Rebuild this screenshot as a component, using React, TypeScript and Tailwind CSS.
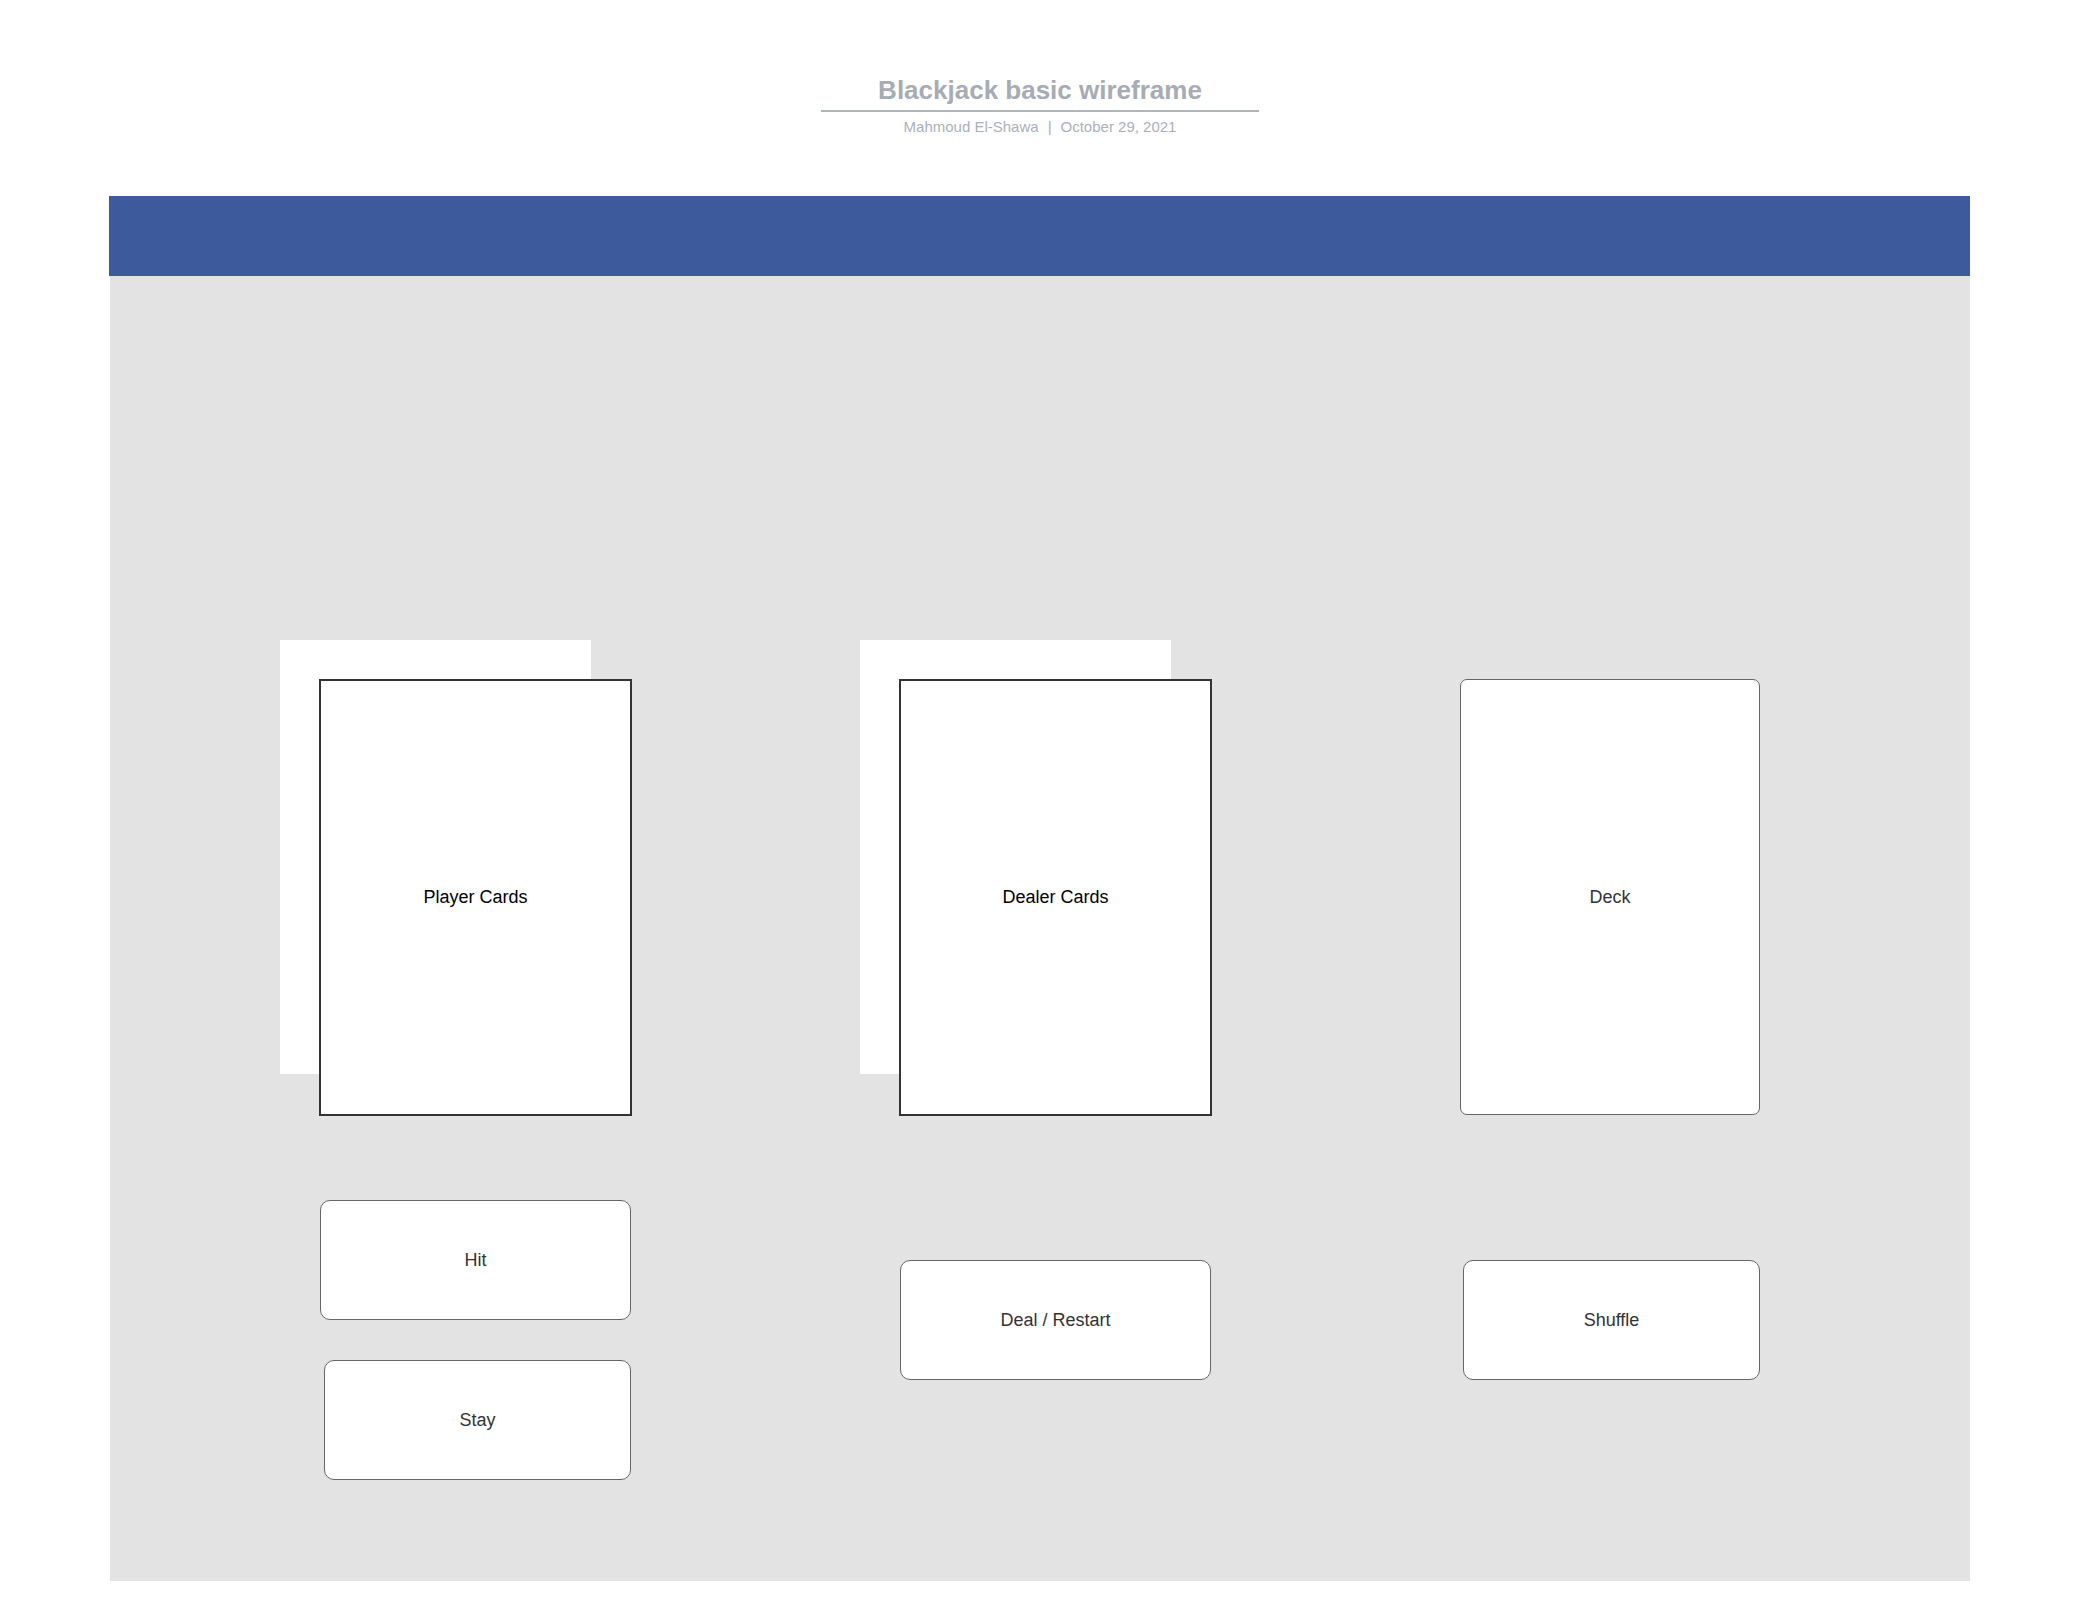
export default function App() {
  const font = { fontFamily: '"Liberation Sans", Arial, sans-serif' }

  return (
    <main className="h-[1600px] w-[2080px] bg-white" style={font}>
      {/* header */}
      <header className="flex flex-col items-center pt-[75px]">
        <h1 className="text-[26px] leading-[30px] font-bold text-[#a6abb4]">
          Blackjack basic wireframe
        </h1>
        <div className="mt-[5px] h-[2px] w-[438px] bg-[#b0b4bb]" />
        <p className="mt-[6px] flex items-center text-[15px] leading-[18px] text-[#abb0b8]">
          <span>Mahmoud El-Shawa</span>
          <span className="mx-[9px]">|</span>
          <span>October 29, 2021</span>
        </p>
      </header>

      {/* app frame */}
      <section className="ml-[109px] mt-[60px] w-[1861px]">
        <div className="h-[80px] bg-[#3d5a9c]" />
        <div className="ml-px h-[1305px] bg-[#e3e3e3] pl-[209px] pt-[403px]">
          <div className="flex items-start">
            {/* player column */}
            <div className="flex w-[313px] flex-col">
              <div className="relative h-[437px] w-[313px]">
                <div className="absolute -left-[39px] -top-[39px] h-[434px] w-[311px] bg-white" />
                <div className="relative flex h-full w-full items-center justify-center border-2 border-[#333] bg-white text-[18px] text-black">
                  Player Cards
                </div>
              </div>
              <button className="mt-[84px] ml-px flex h-[120px] w-[311px] items-center justify-center rounded-[10px] border border-[#666] bg-white text-[18px] text-[#333]">
                Hit
              </button>
              <button className="mt-[40px] ml-[5px] flex h-[120px] w-[307px] items-center justify-center rounded-[10px] border border-[#666] bg-white text-[18px] text-[#333]">
                Stay
              </button>
            </div>

            {/* dealer column */}
            <div className="ml-[267px] flex w-[313px] flex-col">
              <div className="relative h-[437px] w-[313px]">
                <div className="absolute -left-[39px] -top-[39px] h-[434px] w-[311px] bg-white" />
                <div className="relative flex h-full w-full items-center justify-center border-2 border-[#333] bg-white text-[18px] text-black">
                  Dealer Cards
                </div>
              </div>
              <button className="mt-[144px] ml-px flex h-[120px] w-[311px] items-center justify-center rounded-[10px] border border-[#666] bg-white text-[18px] text-[#333]">
                Deal / Restart
              </button>
            </div>

            {/* deck column */}
            <div className="ml-[248px] flex w-[300px] flex-col">
              <div className="flex h-[436px] w-[300px] items-center justify-center rounded-[7px] border border-[#666] bg-white text-[18px] text-[#333]">
                Deck
              </div>
              <button className="mt-[145px] ml-[3px] flex h-[120px] w-[297px] items-center justify-center rounded-[10px] border border-[#666] bg-white text-[18px] text-[#333]">
                Shuffle
              </button>
            </div>
          </div>
        </div>
      </section>
    </main>
  )
}
